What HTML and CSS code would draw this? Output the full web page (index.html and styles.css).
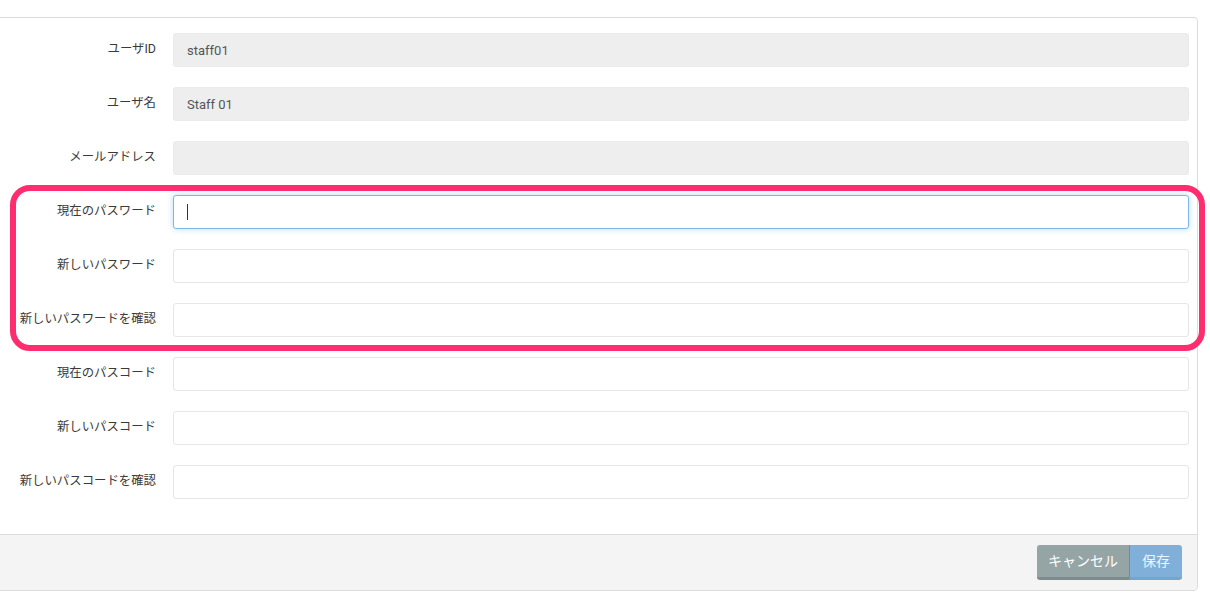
FILE: index.html
```html
<!DOCTYPE html>
<html lang="ja">
<head>
<meta charset="utf-8">
<link rel="stylesheet" href="styles.css">
</head>
<body>
<div class="page">
  <div class="panel">
    <div class="form">
      <label class="label">ユーザID</label>
      <div class="input readonly">staff01</div>
      <label class="label">ユーザ名</label>
      <div class="input readonly">Staff 01</div>
      <label class="label">メールアドレス</label>
      <div class="input readonly"></div>
      <label class="label">現在のパスワード</label>
      <div class="input focused"><span class="caret"></span></div>
      <label class="label">新しいパスワード</label>
      <div class="input"></div>
      <label class="label">新しいパスワードを確認</label>
      <div class="input"></div>
      <label class="label">現在のパスコード</label>
      <div class="input"></div>
      <label class="label">新しいパスコード</label>
      <div class="input"></div>
      <label class="label">新しいパスコードを確認</label>
      <div class="input"></div>
    </div>
    <div class="footer">
      <div class="btn-group">
        <button class="btn btn-cancel">キャンセル</button>
        <button class="btn btn-save">保存</button>
      </div>
    </div>
  </div>
  <div class="highlight"></div>
</div>
</body>
</html>
```
FILE: styles.css
```css
* { box-sizing: border-box; }
html, body {
  margin: 0;
  background: #fff;
  font-family: Roboto, "Noto Sans CJK JP", sans-serif;
  font-size: 13px;
  color: #333;
  overflow: hidden;
}
.page {
  position: relative;
  padding-top: 17px;
  height: 602px;
}
.panel {
  margin-left: -20px;
  width: 1218px;
  border: 1px solid #dcdcdc;
  border-radius: 4px;
  background: #fff;
}
.form {
  display: grid;
  grid-template-columns: 176px 1fr;
  column-gap: 16px;
  row-gap: 20px;
  padding: 15px 8px 35px 0;
}
.label {
  display: flex;
  align-items: center;
  justify-content: flex-end;
  height: 34px;
  padding: 0 1px 4px 0;
  font-size: 12.4px;
  color: #3a3a3a;
  white-space: nowrap;
}
.input {
  height: 34px;
  border: 1px solid #e6e6e6;
  border-radius: 3px;
  padding: 0 13px;
  display: flex;
  align-items: center;
  color: #555;
  background: #fff;
}
.input.readonly {
  background: #eee;
  border-color: #eaeaea;
}
.input.focused {
  border-color: #7db9e8;
  box-shadow: 0 0 6px rgba(102, 175, 233, 0.45);
}
.caret {
  display: block;
  width: 1px;
  height: 16px;
  background: #333;
}
.footer {
  border-top: 1px solid #dcdcdc;
  background: #f4f4f4;
  padding: 10px 15px 10px;
  display: flex;
  justify-content: flex-end;
  border-radius: 0 0 4px 4px;
}
.btn-group { display: flex; }
.btn {
  font-family: Roboto, "Noto Sans CJK JP", sans-serif;
  font-size: 14px;
  height: 35px;
  border: none;
  border-bottom: 3px solid;
  color: #fff;
  padding: 0 11px 3px;
  cursor: pointer;
}
.btn-cancel {
  width: 93px;
  background: #95a5a6;
  border-bottom-color: #7f8c8d;
  border-radius: 3px 0 0 3px;
  border-right: 1px solid #5d8db8;
}
.btn-save {
  width: 52px;
  background: #80b0da;
  border-bottom-color: #74a5d0;
  color: #eef4fa;
  border-radius: 0 3px 3px 0;
}
.highlight {
  position: absolute;
  left: 10px;
  top: 185px;
  width: 1195px;
  height: 166px;
  border: 6px solid #ff2d6f;
  border-radius: 20px;
  pointer-events: none;
}
```
